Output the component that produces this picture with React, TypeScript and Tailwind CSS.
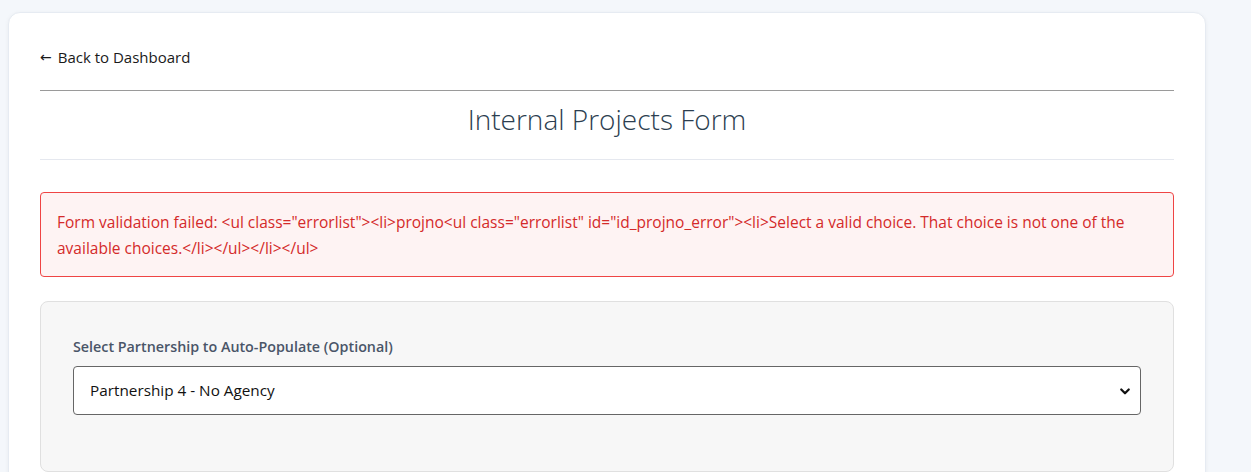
import React from 'react';

const font = { fontFamily: '"Open Sans", "Noto Sans", sans-serif' };

const App: React.FC = () => {
  return (
    <div className="min-h-screen bg-[#f4f7fb] pt-3 pl-2" style={font}>
      <div className="w-[1198px] bg-white rounded-xl border border-[#e6ebf2] shadow-[0_1px_4px_rgba(0,0,0,0.05)] px-[31px] pt-[32px] pb-8">
        {/* Back link */}
        <a href="#" className="flex items-center text-[15px] leading-6 text-[#1a1a1a]">
          <span className="font-['DejaVu_Sans'] text-[14px] leading-6 mr-[6px]">←</span>
          Back to Dashboard
        </a>
        <hr className="mt-[21px] border-0 border-t border-[#9a9a9a]" />

        {/* Title */}
        <div className="pt-[9px] pb-[21px] border-b border-[#e5e8ef]">
          <h1 className="text-center text-[28px] leading-[38px] font-light text-[#2c3e50]">
            Internal Projects Form
          </h1>
        </div>

        {/* Error alert */}
        <div className="mt-8 border border-[#ef4444] bg-[#fef3f3] rounded px-4 pt-4 pb-[15px] text-[15.5px] leading-[26px] text-[#d42a2a]">
          Form validation failed: &lt;ul class="errorlist"&gt;&lt;li&gt;projno&lt;ul class="errorlist" id="id_projno_error"&gt;&lt;li&gt;Select a valid choice. That choice is not one of the
          <br />
          available choices.&lt;/li&gt;&lt;/ul&gt;&lt;/li&gt;&lt;/ul&gt;
        </div>

        {/* Partnership panel */}
        <div className="mt-6 bg-[#f7f7f7] border border-[#e0e0e0] rounded-lg px-8 pt-[35px] pb-[56px]">
          <label className="block text-[14.3px] leading-5 font-semibold text-[#4a5568] mb-[9px]">
            Select Partnership to Auto-Populate (Optional)
          </label>
          <div className="relative">
            <select
              defaultValue="4"
              className="w-full h-[49px] appearance-none bg-white border border-[#666] rounded px-4 text-[15.3px] text-[#111] outline-none"
              style={font}
            >
              <option value="4">Partnership 4 - No Agency</option>
            </select>
            <svg
              className="absolute right-[10px] top-1/2 -translate-y-1/2 pointer-events-none"
              width="12"
              height="12"
              viewBox="0 0 16 16"
              fill="none"
              stroke="#111"
              strokeWidth="3"
              strokeLinecap="round"
              strokeLinejoin="round"
            >
              <path d="M3 6l5 5 5-5" />
            </svg>
          </div>
        </div>
      </div>
    </div>
  );
};

export default App;
